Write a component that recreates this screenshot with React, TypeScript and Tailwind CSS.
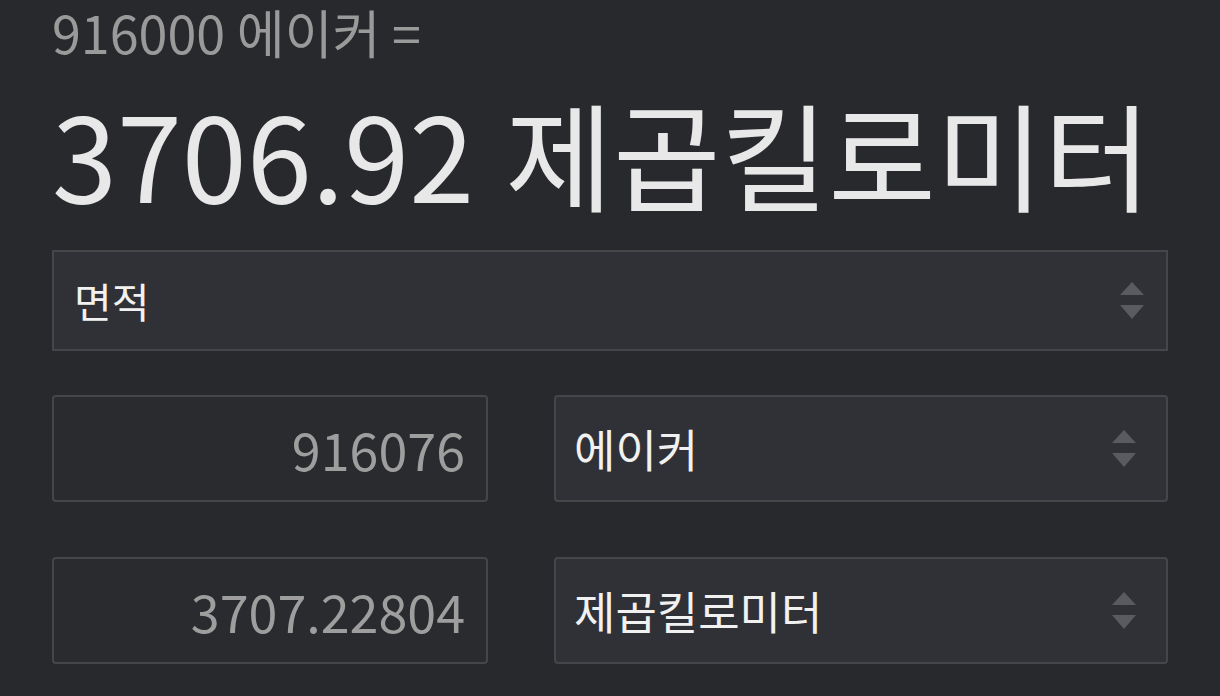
import React from 'react';

function Arrows() {
  return (
    <svg width="24" height="37" viewBox="0 0 24 37" className="shrink-0">
      <polygon points="12,0 24,13 0,13" fill="#5a5b5f" />
      <polygon points="0,23 24,23 12,37" fill="#5a5b5f" />
    </svg>
  );
}

function Select({ label, className, textSize }: { label: string; className: string; textSize: string }) {
  return (
    <div className={`flex items-center justify-between bg-[#303136] border-2 border-[#45464a] ${className}`}>
      <span className={`${textSize} leading-none text-[#f1f1f1] whitespace-nowrap`}>{label}</span>
      <Arrows />
    </div>
  );
}

export default function App() {
  return (
    <div className="w-[1220px] h-[696px] overflow-hidden bg-[#28292c] px-[52px] font-['Noto_Sans_CJK_KR','Noto_Sans',sans-serif]">
      {/* 결과 */}
      <div className="text-[52px] leading-[63px] text-[#9a9a9a] whitespace-nowrap">916000 에이커 =</div>
      <div className="mt-[31px] text-[117px] leading-none text-[#e8e8e8] whitespace-nowrap">
        3706.92 <span className="ml-[5px]">제곱킬로미터</span>
      </div>

      {/* 카테고리 */}
      <Select label="면적" textSize="text-[41px]" className="mt-[39px] h-[101px] pl-[20px] pr-[22px]" />

      {/* 입력 */}
      <div className="mt-[44px] flex gap-[66px]">
        <div className="w-[436px] h-[107px] shrink-0 flex items-center justify-end pr-[21px] bg-[#2a2b2e] border-2 border-[#45464a] rounded-[4px] text-[52px] leading-none text-[#9e9e9e]">
          916076
        </div>
        <Select label="에이커" textSize="text-[45px]" className="flex-1 h-[107px] rounded-[4px] pl-[18px] pr-[30px]" />
      </div>
      <div className="mt-[55px] flex gap-[66px]">
        <div className="w-[436px] h-[107px] shrink-0 flex items-center justify-end pr-[21px] bg-[#2a2b2e] border-2 border-[#45464a] rounded-[4px] text-[52px] leading-none text-[#9e9e9e]">
          3707.22804
        </div>
        <Select label="제곱킬로미터" textSize="text-[45px]" className="flex-1 h-[107px] rounded-[4px] pl-[18px] pr-[30px]" />
      </div>
    </div>
  );
}
